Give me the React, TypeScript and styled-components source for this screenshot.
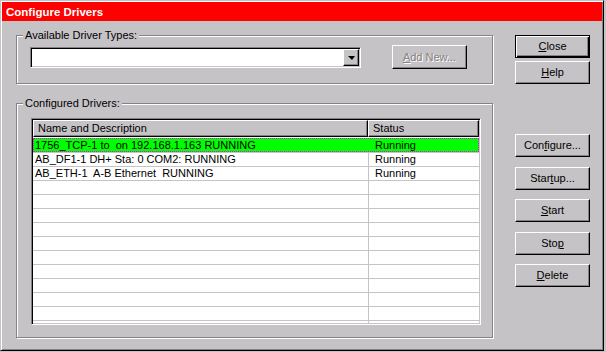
import React from "react";
import styled, { createGlobalStyle, css } from "styled-components";

const GRAY = "#c6c3c6";
const DARK = "#848284";

const Global = createGlobalStyle`
  html, body {
    margin: 0;
    padding: 0;
    width: 606px;
    height: 352px;
    background: ${GRAY};
    overflow: hidden;
  }
  * { box-sizing: border-box; }
  body {
    font-family: "Liberation Sans", Arial, sans-serif;
    font-size: 11px;
    color: #000;
  }
`;

const Window = styled.div`
  width: 604px;
  height: 351px;
  border: 1px solid;
  border-color: ${GRAY} #000 #000 ${GRAY};
  box-shadow: inset 1px 1px 0 #fff, inset -1px -1px 0 ${DARK};
  padding: 1px;
  background: ${GRAY};
  display: flex;
  flex-direction: column;
`;

const TitleBar = styled.div`
  height: 19px;
  background: #ff0000;
  color: #fff;
  font-weight: bold;
  font-size: 11.5px;
  line-height: 19px;
  padding: 1px 0 0 4px;
  white-space: nowrap;
`;

const Body = styled.div`
  display: flex;
  padding: 14px 0 0 14px;
  flex: 1;
`;

const LeftCol = styled.div`
  display: flex;
  flex-direction: column;
  width: 477px;
`;

const Group = styled.div<{ $mt?: number; $pl: number; $pb: number }>`
  width: 477px;
  margin-top: ${(p) => p.$mt ?? 0}px;
  border: 1px solid ${DARK};
  box-shadow: inset 1px 1px 0 #fff, 1px 1px 0 #fff;
  padding: 0 0 ${(p) => p.$pb}px ${(p) => p.$pl}px;
`;

const GroupTitle = styled.div<{ $ml: number }>`
  width: fit-content;
  margin: -7px 0 0 ${(p) => p.$ml}px;
  padding: 0 2px;
  line-height: 13px;
  background: ${GRAY};
  white-space: nowrap;
`;

const ComboRow = styled.div`
  display: flex;
  align-items: center;
  height: 24px;
  margin-top: 3px;
`;

const Combo = styled.div`
  width: 331px;
  height: 21px;
  background: #fff;
  border: 1px solid;
  border-color: ${DARK} #fff #fff ${DARK};
  box-shadow: inset 1px 1px 0 #000, inset -1px -1px 0 ${GRAY};
  padding: 1px;
  display: flex;
  justify-content: flex-end;
`;

const DropButton = styled.div`
  width: 16px;
  height: 17px;
  background: ${GRAY};
  border: 1px solid;
  border-color: #fff #000 #000 #fff;
  box-shadow: inset -1px -1px 0 ${DARK};
  display: flex;
  align-items: center;
  justify-content: center;
`;

const Arrow = styled.div`
  width: 0;
  height: 0;
  border-left: 4px solid transparent;
  border-right: 3px solid transparent;
  border-top: 4px solid #000;
  margin-top: 1px;
`;

const Button = styled.div<{ $default?: boolean; $disabled?: boolean; $h?: number; $ml?: number }>`
  width: 75px;
  height: ${(p) => p.$h ?? 23}px;
  margin-left: ${(p) => p.$ml ?? 0}px;
  background: ${GRAY};
  display: flex;
  align-items: center;
  justify-content: center;
  white-space: nowrap;
  line-height: 13px;
  border: 1px solid;
  ${(p) =>
    p.$default
      ? css`
          border-color: #000;
          box-shadow: inset 1px 1px 0 #fff, inset -1px -1px 0 #000, inset -2px -2px 0 ${DARK};
        `
      : css`
          border-color: #fff #000 #000 #fff;
          box-shadow: inset -1px -1px 0 ${DARK};
        `}
  ${(p) =>
    p.$disabled &&
    css`
      color: ${DARK};
      text-shadow: 1px 1px 0 #fff;
    `}
`;

const ListView = styled.div`
  margin-top: 8px;
  width: 450px;
  height: 207px;
  background: #fff;
  border: 1px solid;
  border-color: ${DARK} #fff #fff ${DARK};
  box-shadow: inset 1px 1px 0 #000, inset -1px -1px 0 ${GRAY};
  padding: 1px;
  overflow: hidden;
  display: flex;
  flex-direction: column;
`;

const Header = styled.div`
  display: grid;
  grid-template-columns: 335px 1fr;
  height: 17px;
  flex: none;
`;

const HeaderCell = styled.div`
  background: ${GRAY};
  border: 1px solid;
  border-color: #fff #000 #000 #fff;
  box-shadow: inset -1px -1px 0 ${DARK};
  padding-left: 4px;
  line-height: 14px;
  white-space: nowrap;
`;

const Rows = styled.div`
  padding-top: 1px;
  overflow: hidden;
  flex: 1;
`;

const Row = styled.div<{ $selected?: boolean }>`
  display: grid;
  grid-template-columns: 336px 1fr;
  height: 14px;
  border-top: 1px solid ${GRAY};
  line-height: 13px;
  white-space: pre;
  ${(p) =>
    p.$selected &&
    css`
      background: #00ff00;
      border-top-color: #00ff00;
      outline: 1px dotted #ff00ff;
      outline-offset: -1px;
    `}
`;

const NameCell = styled.div<{ $selected?: boolean }>`
  padding-left: 2px;
  border-right: 1px solid ${(p) => (p.$selected ? "transparent" : GRAY)};
  overflow: hidden;
`;

const StatusCell = styled.div`
  padding-left: 6px;
  overflow: hidden;
`;

const RightCol = styled.div`
  display: flex;
  flex-direction: column;
  margin-left: 22px;
`;

const TopButtons = styled.div`
  display: flex;
  flex-direction: column;
  gap: 3px;
`;

const ActionButtons = styled.div`
  display: flex;
  flex-direction: column;
  gap: 9.5px;
  margin-top: 50px;
`;

const drivers = [
  { name: "1756_TCP-1 to  on 192.168.1.163 RUNNING", status: "Running" },
  { name: "AB_DF1-1 DH+ Sta: 0 COM2: RUNNING", status: "Running" },
  { name: "AB_ETH-1  A-B Ethernet  RUNNING", status: "Running" },
];

export default function App() {
  const rows = Array.from({ length: 14 }, (_, i) => drivers[i] ?? { name: "", status: "" });
  return (
    <>
      <Global />
      <Window>
        <TitleBar>Configure Drivers</TitleBar>
        <Body>
          <LeftCol>
            <Group $pl={13} $pb={14}>
              <GroupTitle $ml={-7}>Available Driver Types:</GroupTitle>
              <ComboRow>
                <Combo>
                  <DropButton>
                    <Arrow />
                  </DropButton>
                </Combo>
                <Button $disabled $h={24} $ml={31}>
                  <span>
                    <u>A</u>dd New...
                  </span>
                </Button>
              </ComboRow>
            </Group>
            <Group $mt={19} $pl={14} $pb={12}>
              <GroupTitle $ml={-8}>Configured Drivers:</GroupTitle>
              <ListView>
                <Header>
                  <HeaderCell>Name and Description</HeaderCell>
                  <HeaderCell>Status</HeaderCell>
                </Header>
                <Rows>
                  {rows.map((r, i) => (
                    <Row key={i} $selected={i === 0}>
                      <NameCell $selected={i === 0}>{r.name}</NameCell>
                      <StatusCell>{r.status}</StatusCell>
                    </Row>
                  ))}
                </Rows>
              </ListView>
            </Group>
          </LeftCol>
          <RightCol>
            <TopButtons>
              <Button $default>
                <span>
                  <u>C</u>lose
                </span>
              </Button>
              <Button>
                <span>
                  <u>H</u>elp
                </span>
              </Button>
            </TopButtons>
            <ActionButtons>
              <Button>
                <span>
                  Con<u>f</u>igure...
                </span>
              </Button>
              <Button>
                <span>
                  Star<u>t</u>up...
                </span>
              </Button>
              <Button>
                <span>
                  <u>S</u>tart
                </span>
              </Button>
              <Button>
                <span>
                  Sto<u>p</u>
                </span>
              </Button>
              <Button>
                <span>
                  <u>D</u>elete
                </span>
              </Button>
            </ActionButtons>
          </RightCol>
        </Body>
      </Window>
    </>
  );
}
